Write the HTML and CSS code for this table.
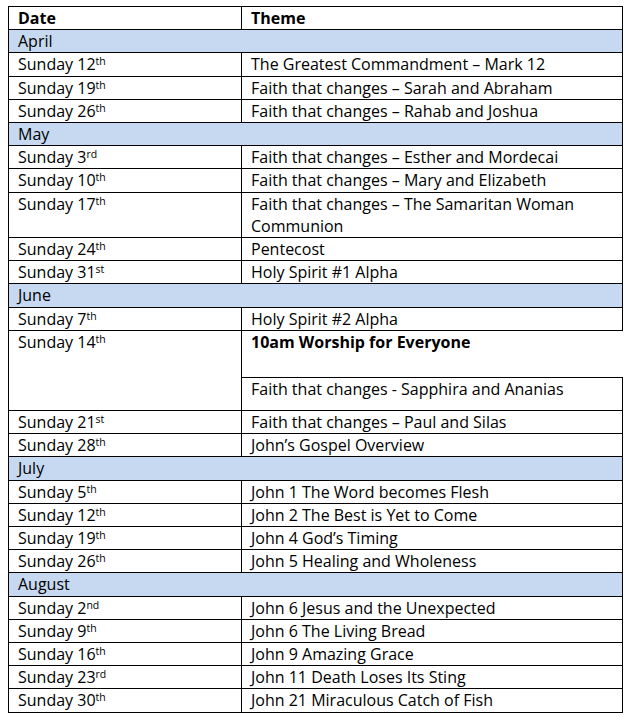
FILE: index.html
```html
<!DOCTYPE html>
<html>
<head>
<meta charset="utf-8">
<link rel="stylesheet" href="styles.css">
</head>
<body>
<table class="schedule">
  <colgroup><col class="c-date"><col class="c-theme"></colgroup>
  <tr class="head"><td>Date</td><td>Theme</td></tr>
  <tr class="month"><td colspan="2">April</td></tr>
  <tr><td>Sunday 12<sup>th</sup></td><td>The Greatest Commandment – Mark 12</td></tr>
  <tr><td>Sunday 19<sup>th</sup></td><td>Faith that changes – Sarah and Abraham</td></tr>
  <tr><td>Sunday 26<sup>th</sup></td><td>Faith that changes – Rahab and Joshua</td></tr>
  <tr class="month"><td colspan="2">May</td></tr>
  <tr><td>Sunday 3<sup>rd</sup></td><td>Faith that changes – Esther and Mordecai</td></tr>
  <tr><td>Sunday 10<sup>th</sup></td><td>Faith that changes – Mary and Elizabeth</td></tr>
  <tr><td>Sunday 17<sup>th</sup></td><td>Faith that changes – The Samaritan Woman<br>Communion</td></tr>
  <tr><td>Sunday 24<sup>th</sup></td><td>Pentecost</td></tr>
  <tr><td>Sunday 31<sup>st</sup></td><td>Holy Spirit #1 Alpha</td></tr>
  <tr class="month"><td colspan="2">June</td></tr>
  <tr><td>Sunday 7<sup>th</sup></td><td>Holy Spirit #2 Alpha</td></tr>
  <tr><td rowspan="2">Sunday 14<sup>th</sup></td><td class="special"><strong>10am Worship for Everyone</strong><br>&nbsp;</td></tr>
  <tr><td class="spaced">Faith that changes - Sapphira and Ananias</td></tr>
  <tr><td>Sunday 21<sup>st</sup></td><td>Faith that changes – Paul and Silas</td></tr>
  <tr><td>Sunday 28<sup>th</sup></td><td>John’s Gospel Overview</td></tr>
  <tr class="month"><td colspan="2">July</td></tr>
  <tr><td>Sunday 5<sup>th</sup></td><td>John 1 The Word becomes Flesh</td></tr>
  <tr><td>Sunday 12<sup>th</sup></td><td>John 2 The Best is Yet to Come</td></tr>
  <tr><td>Sunday 19<sup>th</sup></td><td>John 4 God’s Timing</td></tr>
  <tr><td>Sunday 26<sup>th</sup></td><td>John 5 Healing and Wholeness</td></tr>
  <tr class="month"><td colspan="2">August</td></tr>
  <tr><td>Sunday 2<sup>nd</sup></td><td>John 6 Jesus and the Unexpected</td></tr>
  <tr><td>Sunday 9<sup>th</sup></td><td>John 6 The Living Bread</td></tr>
  <tr><td>Sunday 16<sup>th</sup></td><td>John 9 Amazing Grace</td></tr>
  <tr><td>Sunday 23<sup>rd</sup></td><td>John 11 Death Loses Its Sting</td></tr>
  <tr><td>Sunday 30<sup>th</sup></td><td>John 21 Miraculous Catch of Fish</td></tr>
</table>
</body>
</html>
```
FILE: styles.css
```css
html, body {
  margin: 0;
  padding: 0;
  background: #fff;
}
body {
  padding: 6px 0 0 8px;
  font-family: "Open Sans", "Liberation Sans", sans-serif;
  font-size: 16px;
  color: #000;
}
.schedule {
  border-collapse: collapse;
  table-layout: fixed;
  width: 614px;
}
.c-date { width: 233px; }
.c-theme { width: 381px; }
.schedule td {
  border: 1px solid #000;
  padding: 0 6px 0 9px;
  line-height: 22.2px;
  vertical-align: top;
  white-space: nowrap;
}
.schedule sup {
  font-size: 10.5px;
  line-height: 0;
  vertical-align: 5px;
}
.head td { font-weight: bold; }
.month td { background: #c6d9f1; }
.schedule td.special {
  border-right: none;
  padding-bottom: 1.6px;
}
.schedule td.spaced { padding-bottom: 10px; }
strong { font-weight: bold; }
```
